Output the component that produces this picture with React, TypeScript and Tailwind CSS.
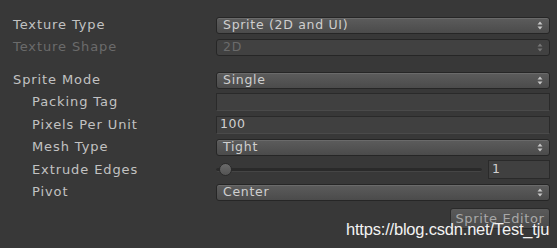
const font = "font-['DejaVu_Sans',sans-serif]";

function Arrows({ dim }: { dim?: boolean }) {
    return (
        <svg width="6" height="9" viewBox="0 0 6 9" className={dim ? "opacity-40" : ""}>
            <path d="M3 0.5 L5.5 3.5 L0.5 3.5 Z" fill="#c8c8c8" />
            <path d="M3 8.5 L5.5 5.5 L0.5 5.5 Z" fill="#c8c8c8" />
        </svg>
    );
}

function Dropdown({ value, disabled }: { value: string; disabled?: boolean }) {
    return (
        <div
            className={`flex-1 h-[17px] flex items-center justify-between pl-[6px] pr-[6px] rounded-[3px] border border-[#262626] ${
                disabled
                    ? "bg-[#414141] text-[#6b6b6b]"
                    : "bg-gradient-to-b from-[#5c5c5c] to-[#4b4b4b] text-[#cfcfcf] shadow-[inset_0_1px_0_#6a6a6a]"
            }`}
        >
            <span className="text-[12.5px] tracking-[0.7px] leading-none">{value}</span>
            <Arrows dim={disabled} />
        </div>
    );
}

function Field({ value }: { value?: string }) {
    return (
        <div className="flex-1 h-[18px] flex items-center pl-[3px] bg-[#404040] border border-[#2a2a2a] border-b-[#4a4a4a] text-[#d0d0d0] text-[12.5px] tracking-[0.6px]">
            {value}
        </div>
    );
}

function Row({
    label,
    indent,
    disabled,
    h = "h-[22px]",
    children,
}: {
    label: string;
    indent?: boolean;
    disabled?: boolean;
    h?: string;
    children: React.ReactNode;
}) {
    return (
        <div className={`flex items-center ${h}`}>
            <div
                className={`w-[216px] shrink-0 text-[13px] tracking-[0.9px] ${indent ? "pl-[32px]" : "pl-[13px]"} ${
                    disabled ? "text-[#6b6b6b]" : "text-[#c2c2c2]"
                }`}
            >
                {label}
            </div>
            <div className="flex-1 flex items-center pr-[7px]">{children}</div>
        </div>
    );
}

export default function App() {
    return (
        <div className={`relative w-[557px] h-[248px] overflow-hidden bg-[#383838] ${font}`}>
            <div className="pt-[14px]">
                <Row label="Texture Type">
                    <Dropdown value="Sprite (2D and UI)" />
                </Row>
                <Row label="Texture Shape" disabled>
                    <Dropdown value="2D" disabled />
                </Row>
                <div className="h-[11px]" />
                <Row label="Sprite Mode">
                    <Dropdown value="Single" />
                </Row>
                <Row label="Packing Tag" indent>
                    <Field />
                </Row>
                <Row label="Pixels Per Unit" indent h="h-[23px]">
                    <Field value="100" />
                </Row>
                <Row label="Mesh Type" indent>
                    <Dropdown value="Tight" />
                </Row>
                <Row label="Extrude Edges" indent h="h-[23px]">
                    <div className="flex-1 flex items-center gap-[6px]">
                        <div className="relative flex-1 h-[4px] rounded-full bg-[#2a2a2a] border-b border-[#454545]">
                            <div className="absolute left-[3px] top-[-5px] w-[13px] h-[13px] rounded-full bg-gradient-to-b from-[#6a6a6a] to-[#545454] border border-[#2a2a2a]" />
                        </div>
                        <div className="w-[62px] h-[19px] flex items-center pl-[3px] bg-[#404040] border border-[#2a2a2a] text-[#d0d0d0] text-[12.5px]">
                            1
                        </div>
                    </div>
                </Row>
                <Row label="Pivot" indent>
                    <Dropdown value="Center" />
                </Row>
                <div className="flex justify-end pr-[7px] pt-[5px]">
                    <div className="w-[100px] h-[21px] flex items-center justify-center rounded-[3px] border border-[#2a2a2a] bg-gradient-to-b from-[#5a5a5a] to-[#4a4a4a] text-[#a8a8a8] text-[13px] tracking-[0.6px]">
                        Sprite Editor
                    </div>
                </div>
                <div className="flex items-center gap-[7px] pt-[15px]">
                    <div className="w-[9px] h-[9px] bg-[#8a8a8a]" />
                    <span className="text-[13px] text-[#c2c2c2] tracking-[0.9px]">Advanced</span>
                </div>
            </div>
            <div className="absolute left-[346px] top-[217px] text-[16.5px] text-[#f2f2f2] font-['Liberation_Sans',sans-serif] tracking-[-0.2px]">
                https://blog.csdn.net/Test_tju
            </div>
        </div>
    );
}
